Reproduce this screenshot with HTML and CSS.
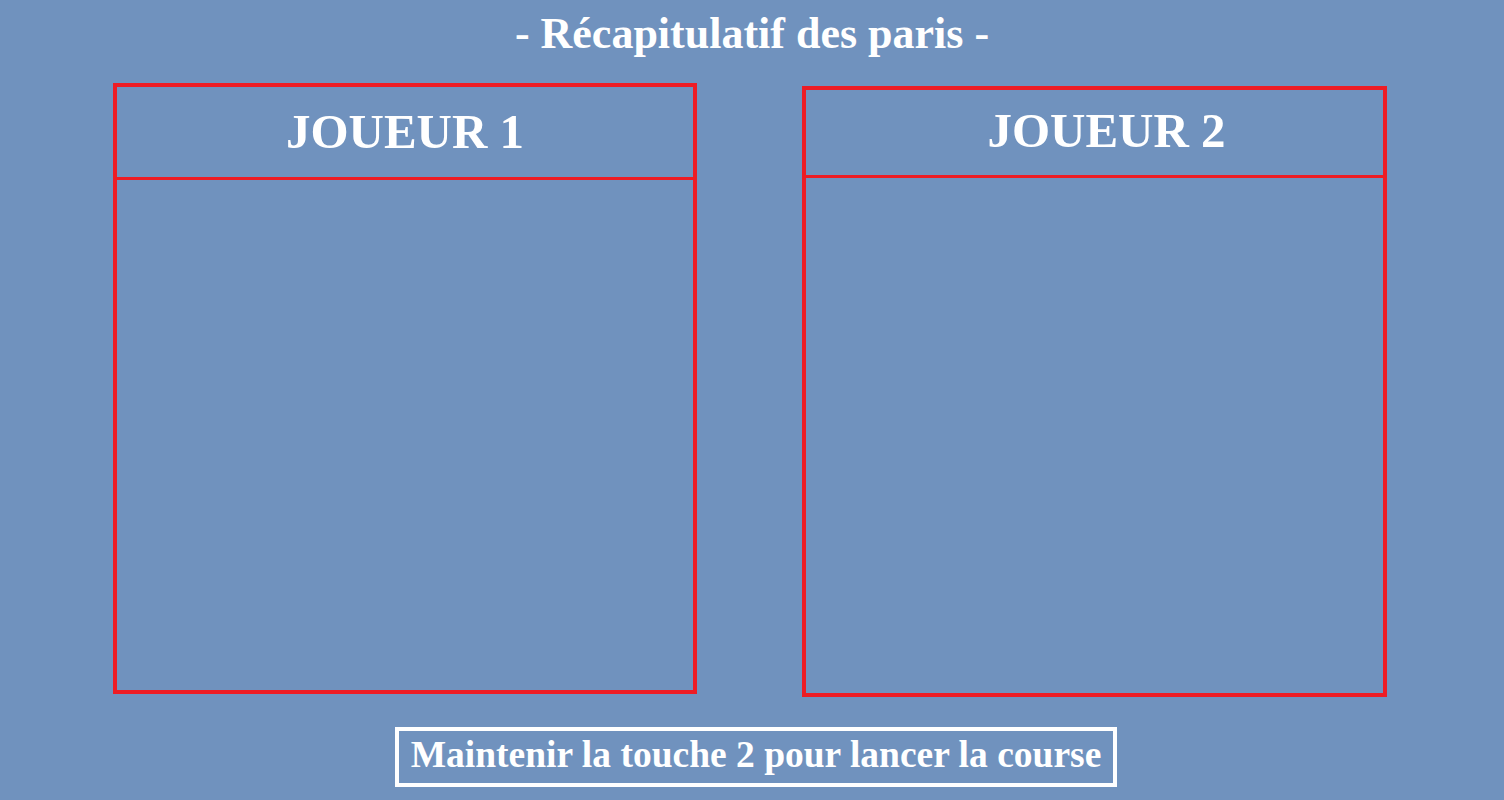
FILE: index.html
```html
<!DOCTYPE html>
<html lang="fr">
<head>
    <meta charset="UTF-8">
    <meta name="viewport" content="width=device-width, initial-scale=1.0">
    <title>Récapitulatif des paris</title>
    <link rel="stylesheet" href="styles.css">
</head>
<body>

<h1 class="title">- Récapitulatif des paris -</h1>

<!-- Bets of each player -->
<div class="players">
    <section class="player player-one">
        <div class="player-head">JOUEUR 1</div>
        <div class="player-bets"></div>
    </section>
    <section class="player player-two">
        <div class="player-head">JOUEUR 2</div>
        <div class="player-bets"></div>
    </section>
</div>

<div class="hint-row">
    <div class="hint">Maintenir la touche 2 pour lancer la course</div>
</div>

</body>
</html>
```

FILE: styles.css
```css
body {
    margin: 0;
    padding: 0;
    height: 800px;
    overflow: hidden;
    background-color: #7092be;
    color: white;
    font-family: "Liberation Serif", "Times New Roman", serif;
    font-weight: bold;
}

.title {
    margin: 0;
    padding-top: 12px;
    font-size: 44px;
    line-height: 43px;
    text-align: center;
}

/* Player boxes */
.players {
    display: flex;
    align-items: flex-start;
    gap: 105px;
    margin-top: 28px;
    padding-left: 113px;
}

.player {
    box-sizing: border-box;
    height: 611px;
    border: 4px solid #ed1c24;
}

.player-one {
    width: 584px;
}

.player-two {
    width: 585px;
    margin-top: 3px;
}

.player-head {
    font-size: 49px;
    text-align: center;
    border-bottom: 3px solid #ed1c24;
}

.player-one .player-head {
    height: 90px;
    line-height: 90px;
}

.player-two .player-head {
    height: 81px;
    line-height: 81px;
    padding-bottom: 4px;
    padding-left: 24px;
}

/* Bottom hint */
.hint-row {
    display: flex;
    justify-content: center;
    margin-top: 30px;
    margin-left: 8px;
}

.hint {
    border: 4px solid white;
    padding: 0 12px 4px;
    font-size: 37.5px;
    line-height: 48px;
    white-space: nowrap;
}
```
